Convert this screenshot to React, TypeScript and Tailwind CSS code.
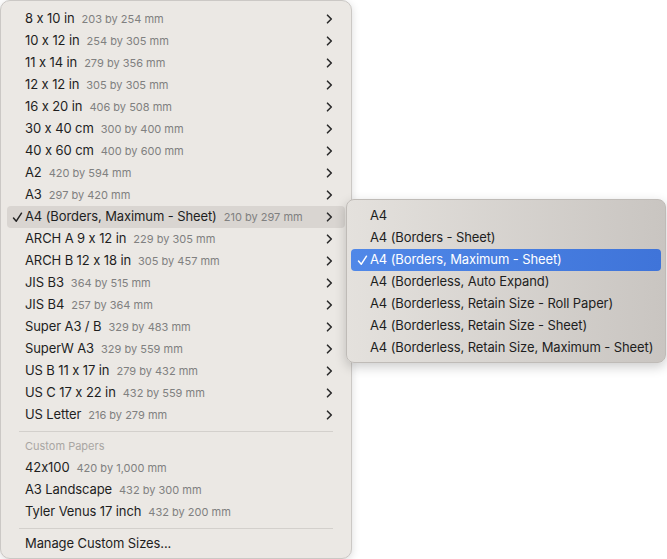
import React from 'react';

const papers = [
  { name: '8 x 10 in', size: '203 by 254 mm' },
  { name: '10 x 12 in', size: '254 by 305 mm' },
  { name: '11 x 14 in', size: '279 by 356 mm' },
  { name: '12 x 12 in', size: '305 by 305 mm' },
  { name: '16 x 20 in', size: '406 by 508 mm' },
  { name: '30 x 40 cm', size: '300 by 400 mm' },
  { name: '40 x 60 cm', size: '400 by 600 mm' },
  { name: 'A2', size: '420 by 594 mm' },
  { name: 'A3', size: '297 by 420 mm' },
  { name: 'A4 (Borders, Maximum - Sheet)', size: '210 by 297 mm', checked: true },
  { name: 'ARCH A 9 x 12 in', size: '229 by 305 mm' },
  { name: 'ARCH B 12 x 18 in', size: '305 by 457 mm' },
  { name: 'JIS B3', size: '364 by 515 mm' },
  { name: 'JIS B4', size: '257 by 364 mm' },
  { name: 'Super A3 / B', size: '329 by 483 mm' },
  { name: 'SuperW A3', size: '329 by 559 mm' },
  { name: 'US B 11 x 17 in', size: '279 by 432 mm' },
  { name: 'US C 17 x 22 in', size: '432 by 559 mm' },
  { name: 'US Letter', size: '216 by 279 mm' }
];

const customPapers = [
  { name: '42x100', size: '420 by 1,000 mm' },
  { name: 'A3 Landscape', size: '432 by 300 mm' },
  { name: 'Tyler Venus 17 inch', size: '432 by 200 mm' }
];

const a4Options = [
  'A4',
  'A4 (Borders - Sheet)',
  'A4 (Borders, Maximum - Sheet)',
  'A4 (Borderless, Auto Expand)',
  'A4 (Borderless, Retain Size - Roll Paper)',
  'A4 (Borderless, Retain Size - Sheet)',
  'A4 (Borderless, Retain Size, Maximum - Sheet)'
];

const Chevron: React.FC = () => (
  <svg width="7" height="10" viewBox="0 0 7 10" fill="none" stroke="#2a2a2a" strokeWidth={1.6} strokeLinecap="round" strokeLinejoin="round">
    <path d="M1.5 1.2l3.8 3.8-3.8 3.8" />
  </svg>
);

const Check: React.FC<{ color?: string }> = ({ color = '#222' }) => (
  <svg width="11" height="11" viewBox="0 0 11 11" fill="none" stroke={color} strokeWidth={1.5} strokeLinecap="round" strokeLinejoin="round">
    <path d="M1.5 6l2.8 3.2L9.5 1.2" />
  </svg>
);

const App: React.FC = () => {
  return (
    <div className="relative w-[667px] h-[559px] bg-white overflow-hidden" style={{ fontFamily: 'Inter, "Liberation Sans", sans-serif' }}>
      {/* Main paper menu */}
      <div className="w-[352px] h-[559px] bg-[#ebe8e4] border border-[#cbc8c5] rounded-[10px] pt-[7px] px-[6px] shadow-[0_2px_8px_rgba(0,0,0,0.15)]">
        {papers.map((p) => (
          <div
            key={p.name}
            className={`flex items-center h-[22px] rounded-[4px] pl-[2px] pr-[12px] ${p.checked ? 'bg-[#d9d5d1]' : ''}`}
          >
            <div className="w-[16px] flex justify-center">{p.checked && <Check />}</div>
            <span className="text-[13px] text-[#1e1e1e] tracking-[-0.1px]">{p.name}</span>
            <span className="ml-[7px] text-[11px] text-[#808080]">{p.size}</span>
            <div className="ml-auto flex items-center">
              <Chevron />
            </div>
          </div>
        ))}

        <div className="mx-[12px] mt-[5px] mb-[5px] h-px bg-[#d3d0cc]" />

        <div className="h-[18px] flex items-center pl-[18px] text-[11px] text-[#a9a6a3]">Custom Papers</div>
        <div className="h-[2px]" />
        {customPapers.map((p) => (
          <div key={p.name} className="flex items-center h-[22px] pl-[18px]">
            <span className="text-[13px] text-[#1e1e1e] tracking-[-0.1px]">{p.name}</span>
            <span className="ml-[7px] text-[11px] text-[#808080]">{p.size}</span>
          </div>
        ))}

        <div className="mx-[12px] mt-[5px] mb-[4px] h-px bg-[#d3d0cc]" />

        <div className="flex items-center h-[22px] pl-[18px]">
          <span className="text-[13px] text-[#1e1e1e] tracking-[-0.1px]">Manage Custom Sizes...</span>
        </div>
      </div>

      {/* Submenu */}
      <div className="absolute left-[346px] top-[199px] w-[320px] h-[164px] rounded-[8px] border border-[#bfbbb7] bg-gradient-to-r from-[#e4e1dd] to-[#c9c5c1] shadow-[0_4px_12px_rgba(0,0,0,0.2)] pt-[5px] px-[4px]">
        {a4Options.map((opt) => {
          const active = opt === 'A4 (Borders, Maximum - Sheet)';
          return (
            <div
              key={opt}
              className={`flex items-center h-[22px] rounded-[4px] pl-[4px] ${active ? 'bg-gradient-to-r from-[#5088e8] to-[#3f74d9] text-white' : 'text-[#1e1e1e]'}`}
            >
              <div className="w-[15px] flex justify-center">{active && <Check color="#fff" />}</div>
              <span className="text-[13px] tracking-[-0.1px]">{opt}</span>
            </div>
          );
        })}
      </div>
    </div>
  );
};

export default App;
